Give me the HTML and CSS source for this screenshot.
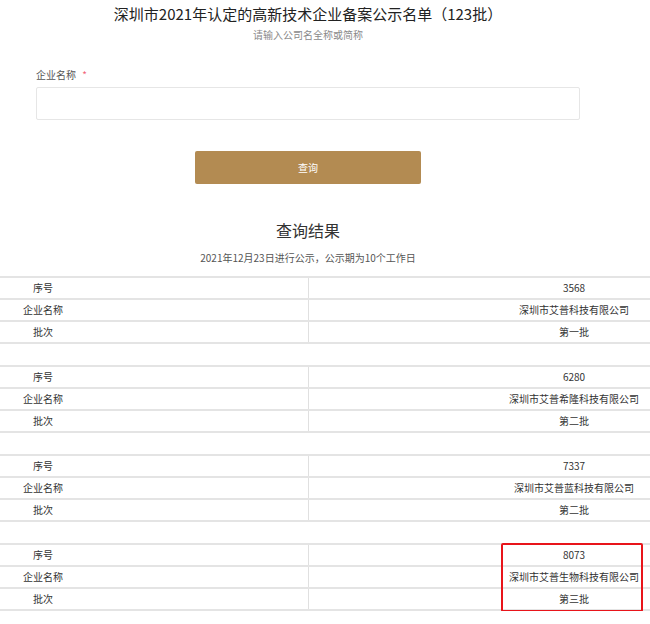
FILE: index.html
```html
<!DOCTYPE html>
<html lang="zh-CN">
<head>
<meta charset="utf-8">
<title>深圳市2021年认定的高新技术企业备案公示名单</title>
<link rel="stylesheet" href="styles.css">
</head>
<body>
<div class="page">
  <h1 class="title">深圳市2021年认定的高新技术企业备案公示名单（123批）</h1>
  <p class="subtitle">请输入公司名全称或简称</p>
  <div class="form">
    <label class="label">企业名称 <span class="star">*</span></label>
    <div class="input"></div>
  </div>
  <div class="btn-row"><button class="btn">查询</button></div>
  <h2 class="result-title">查询结果</h2>
  <p class="date">2021年12月23日进行公示，公示期为10个工作日</p>
</div>
<div class="results">
  <div class="group">
    <div class="row"><div class="key"><span>序号</span></div><div class="val"><span>3568</span></div></div>
    <div class="row"><div class="key"><span>企业名称</span></div><div class="val"><span>深圳市艾普科技有限公司</span></div></div>
    <div class="row"><div class="key"><span>批次</span></div><div class="val"><span>第一批</span></div></div>
  </div>
  <div class="group">
    <div class="row"><div class="key"><span>序号</span></div><div class="val"><span>6280</span></div></div>
    <div class="row"><div class="key"><span>企业名称</span></div><div class="val"><span>深圳市艾普希隆科技有限公司</span></div></div>
    <div class="row"><div class="key"><span>批次</span></div><div class="val"><span>第二批</span></div></div>
  </div>
  <div class="group">
    <div class="row"><div class="key"><span>序号</span></div><div class="val"><span>7337</span></div></div>
    <div class="row"><div class="key"><span>企业名称</span></div><div class="val"><span>深圳市艾普蓝科技有限公司</span></div></div>
    <div class="row"><div class="key"><span>批次</span></div><div class="val"><span>第二批</span></div></div>
  </div>
  <div class="group marked">
    <div class="row"><div class="key"><span>序号</span></div><div class="val"><span>8073</span></div></div>
    <div class="row"><div class="key"><span>企业名称</span></div><div class="val"><span>深圳市艾普生物科技有限公司</span></div></div>
    <div class="row"><div class="key"><span>批次</span></div><div class="val"><span>第三批</span></div></div>
    <div class="highlight"></div>
  </div>
</div>
</body>
</html>
```
FILE: styles.css
```css
* { box-sizing: border-box; }
html, body { margin: 0; padding: 0; background: #fff; }
body {
  width: 650px;
  font-family: "Noto Sans CJK SC", "Noto Sans", sans-serif;
  color: #333;
}
.page {
  width: 616px;
  display: flex;
  flex-direction: column;
  align-items: center;
}
.title {
  margin: 4px 0 0;
  font-size: 15px;
  line-height: 20px;
  font-weight: 400;
  color: #222;
  white-space: nowrap;
}
.subtitle {
  margin: 4px 0 0;
  font-size: 10px;
  line-height: 14px;
  color: #8a8a8a;
}
.form {
  align-self: stretch;
  margin: 26px 36px 0;
  display: flex;
  flex-direction: column;
}
.label {
  font-size: 10px;
  line-height: 14px;
  color: #555;
}
.star {
  color: #f2637b;
  margin-left: 4px;
}
.input {
  margin-top: 5px;
  height: 33px;
  border: 1px solid #e6e6e6;
  border-radius: 2px;
  background: #fff;
}
.btn-row {
  margin-top: 31px;
  display: flex;
  justify-content: center;
}
.btn {
  width: 226px;
  height: 33px;
  border: 0;
  border-radius: 2px;
  background: #b38b52;
  color: #fff;
  font-family: inherit;
  font-size: 10px;
  padding: 0;
}
.result-title {
  margin: 35px 0 0;
  font-size: 16px;
  line-height: 22px;
  font-weight: 400;
  color: #333;
}
.date {
  margin: 10px 0 0;
  font-size: 10px;
  line-height: 14px;
  color: #555;
}
.results {
  margin-top: 11px;
  display: flex;
  flex-direction: column;
  gap: 21px;
}
.group {
  position: relative;
  border-top: 2px solid #e4e4e4;
}
.row {
  display: flex;
  height: 22px;
  border-bottom: 2px solid #e4e4e4;
  font-size: 10px;
  line-height: 20px;
  color: #333;
}
.key {
  width: 309px;
  border-right: 1px solid #e0e0e0;
}
.key span {
  display: block;
  width: 86px;
  text-align: center;
}
.val {
  flex: 1;
  display: flex;
  justify-content: flex-end;
}
.val span {
  display: block;
  width: 150px;
  padding-right: 2px;
  text-align: center;
  white-space: nowrap;
}
.highlight {
  position: absolute;
  left: 501px;
  top: -2px;
  width: 142px;
  height: 69px;
  border: 2px solid #e8141a;
  border-radius: 2px;
}
```
